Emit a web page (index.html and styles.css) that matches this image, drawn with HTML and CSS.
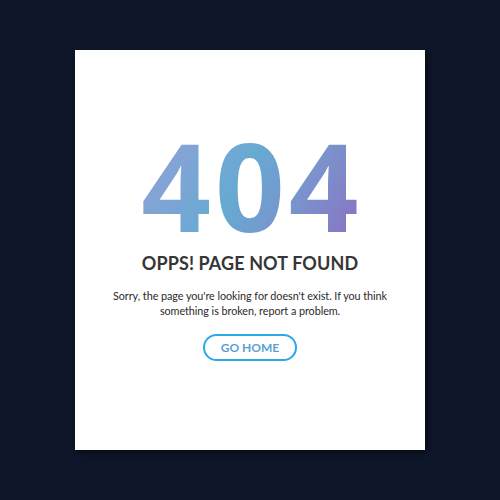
FILE: index.html
```html
<!DOCTYPE html>
<html>
<head>
<meta charset="utf-8">
<link rel="stylesheet" href="styles.css">
</head>
<body>
<main class="page">
  <section class="card">
    <h1 class="code">404</h1>
    <h2 class="title">OPPS! PAGE NOT FOUND</h2>
    <p class="message">Sorry, the page you're looking for doesn't exist. If you think<br>something is broken, report a problem.</p>
    <a class="home-btn" href="#">GO HOME</a>
  </section>
</main>
</body>
</html>
```
FILE: styles.css
```css
* { box-sizing: border-box; }
html, body { margin: 0; padding: 0; }
body {
  background: #0e172a;
  font-family: "Lato", "Open Sans", sans-serif;
  width: 500px;
  height: 500px;
}
.page {
  display: flex;
  justify-content: center;
  padding-top: 50px;
}
.card {
  width: 350px;
  height: 400px;
  background: #fff;
  box-shadow: 3px 3px 6px rgba(0,0,0,0.6);
  display: flex;
  flex-direction: column;
  align-items: center;
  padding-top: 85px;
}
.code {
  margin: 0 0 0 4px;
  font-family: "Open Sans", sans-serif;
  font-weight: 700;
  font-size: 122px;
  line-height: 100px;
  height: 100px;
  letter-spacing: 4px;
  background: linear-gradient(120deg, #96a0d8 0%, #66aad2 45%, #7a93cc 70%, #8b70c2 100%);
  -webkit-background-clip: text;
  background-clip: text;
  color: transparent;
}
.title {
  margin: 17px 0 0;
  font-size: 18px;
  line-height: 22px;
  font-weight: 700;
  color: #363636;
  letter-spacing: 0.1px;
}
.message {
  margin: 14px 0 0;
  width: 320px;
  text-align: center;
  font-size: 10.8px;
  line-height: 15px;
  letter-spacing: -0.05px;
  color: #2a2a2a;
}
.home-btn {
  margin-top: 16px;
  width: 94px;
  height: 27px;
  border: 2px solid #2aa8e8;
  border-radius: 14px;
  display: flex;
  align-items: center;
  justify-content: center;
  color: #5a9fd4;
  font-weight: 700;
  font-size: 12px;
  text-decoration: none;
}
```
